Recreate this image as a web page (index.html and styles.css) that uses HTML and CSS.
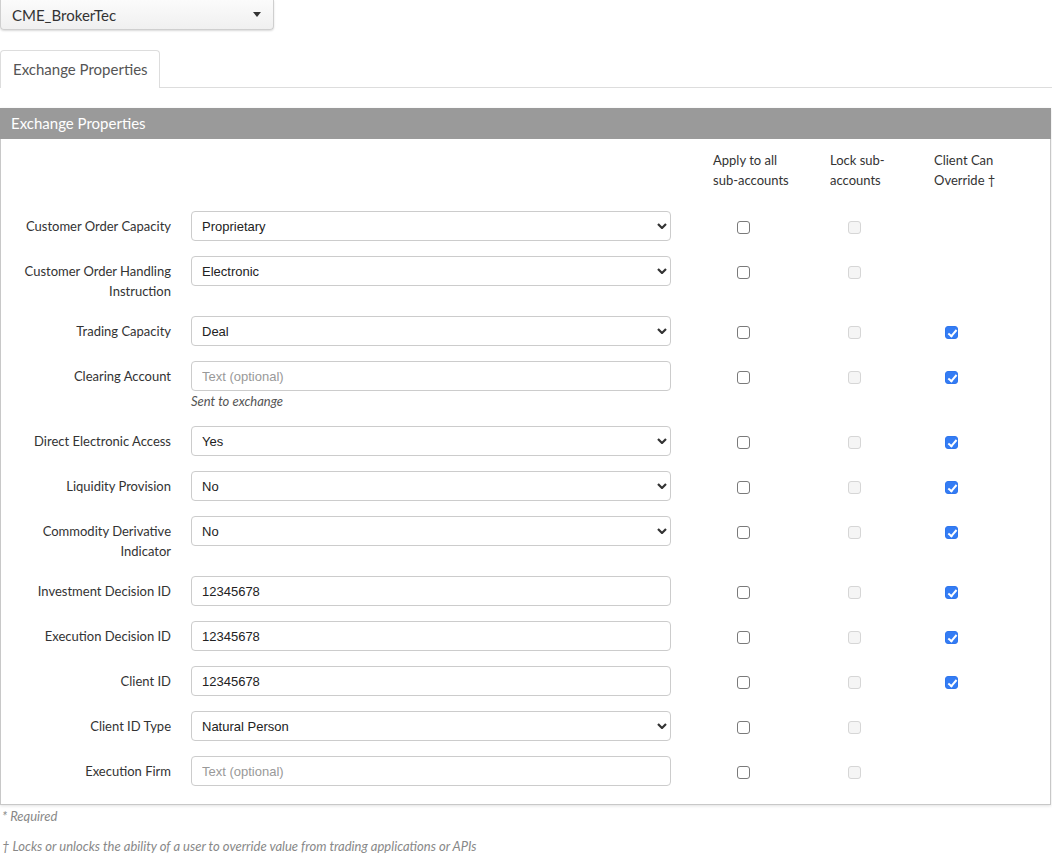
FILE: index.html
```html
<!DOCTYPE html>
<html lang="en">

<head>
    <meta charset="UTF-8">
    <title>Exchange Properties</title>
    <link rel="stylesheet" href="styles.css">
</head>

<body>
    <button class="exchange-picker">
        <span>CME_BrokerTec</span>
        <span class="caret"></span>
    </button>

    <ul class="tabs">
        <li class="tab active">Exchange Properties</li>
    </ul>

    <div class="panel">
        <div class="panel-heading">Exchange Properties</div>
        <div class="panel-body">

            <div class="row head-row">
                <div></div>
                <div></div>
                <div class="col-title">Apply to all<br>sub-accounts</div>
                <div class="col-title">Lock sub-<br>accounts</div>
                <div class="col-title">Client Can<br>Override &dagger;</div>
            </div>

            <div class="row">
                <label class="field-label">Customer Order Capacity</label>
                <div class="control">
                    <div class="select-wrap">
                        <select><option>Proprietary</option></select>
                        <svg class="chevron" viewBox="0 0 10 6"><path d="M1 1l4 4 4-4" /></svg>
                    </div>
                </div>
                <div class="check apply"><input type="checkbox"></div>
                <div class="check lock"><input type="checkbox" disabled></div>
                <div class="check override"></div>
            </div>

            <div class="row">
                <label class="field-label">Customer Order Handling Instruction</label>
                <div class="control">
                    <div class="select-wrap">
                        <select><option>Electronic</option></select>
                        <svg class="chevron" viewBox="0 0 10 6"><path d="M1 1l4 4 4-4" /></svg>
                    </div>
                </div>
                <div class="check apply"><input type="checkbox"></div>
                <div class="check lock"><input type="checkbox" disabled></div>
                <div class="check override"></div>
            </div>

            <div class="row">
                <label class="field-label">Trading Capacity</label>
                <div class="control">
                    <div class="select-wrap">
                        <select><option>Deal</option></select>
                        <svg class="chevron" viewBox="0 0 10 6"><path d="M1 1l4 4 4-4" /></svg>
                    </div>
                </div>
                <div class="check apply"><input type="checkbox"></div>
                <div class="check lock"><input type="checkbox" disabled></div>
                <div class="check override"><input type="checkbox" checked></div>
            </div>

            <div class="row">
                <label class="field-label">Clearing Account</label>
                <div class="control">
                    <input type="text" class="text-input" placeholder="Text (optional)">
                    <p class="help">Sent to exchange</p>
                </div>
                <div class="check apply"><input type="checkbox"></div>
                <div class="check lock"><input type="checkbox" disabled></div>
                <div class="check override"><input type="checkbox" checked></div>
            </div>

            <div class="row">
                <label class="field-label">Direct Electronic Access</label>
                <div class="control">
                    <div class="select-wrap">
                        <select><option>Yes</option></select>
                        <svg class="chevron" viewBox="0 0 10 6"><path d="M1 1l4 4 4-4" /></svg>
                    </div>
                </div>
                <div class="check apply"><input type="checkbox"></div>
                <div class="check lock"><input type="checkbox" disabled></div>
                <div class="check override"><input type="checkbox" checked></div>
            </div>

            <div class="row">
                <label class="field-label">Liquidity Provision</label>
                <div class="control">
                    <div class="select-wrap">
                        <select><option>No</option></select>
                        <svg class="chevron" viewBox="0 0 10 6"><path d="M1 1l4 4 4-4" /></svg>
                    </div>
                </div>
                <div class="check apply"><input type="checkbox"></div>
                <div class="check lock"><input type="checkbox" disabled></div>
                <div class="check override"><input type="checkbox" checked></div>
            </div>

            <div class="row">
                <label class="field-label">Commodity Derivative Indicator</label>
                <div class="control">
                    <div class="select-wrap">
                        <select><option>No</option></select>
                        <svg class="chevron" viewBox="0 0 10 6"><path d="M1 1l4 4 4-4" /></svg>
                    </div>
                </div>
                <div class="check apply"><input type="checkbox"></div>
                <div class="check lock"><input type="checkbox" disabled></div>
                <div class="check override"><input type="checkbox" checked></div>
            </div>

            <div class="row">
                <label class="field-label">Investment Decision ID</label>
                <div class="control">
                    <input type="text" class="text-input" value="12345678">
                </div>
                <div class="check apply"><input type="checkbox"></div>
                <div class="check lock"><input type="checkbox" disabled></div>
                <div class="check override"><input type="checkbox" checked></div>
            </div>

            <div class="row">
                <label class="field-label">Execution Decision ID</label>
                <div class="control">
                    <input type="text" class="text-input" value="12345678">
                </div>
                <div class="check apply"><input type="checkbox"></div>
                <div class="check lock"><input type="checkbox" disabled></div>
                <div class="check override"><input type="checkbox" checked></div>
            </div>

            <div class="row">
                <label class="field-label">Client ID</label>
                <div class="control">
                    <input type="text" class="text-input" value="12345678">
                </div>
                <div class="check apply"><input type="checkbox"></div>
                <div class="check lock"><input type="checkbox" disabled></div>
                <div class="check override"><input type="checkbox" checked></div>
            </div>

            <div class="row">
                <label class="field-label">Client ID Type</label>
                <div class="control">
                    <div class="select-wrap">
                        <select><option>Natural Person</option></select>
                        <svg class="chevron" viewBox="0 0 10 6"><path d="M1 1l4 4 4-4" /></svg>
                    </div>
                </div>
                <div class="check apply"><input type="checkbox"></div>
                <div class="check lock"><input type="checkbox" disabled></div>
                <div class="check override"></div>
            </div>

            <div class="row">
                <label class="field-label">Execution Firm</label>
                <div class="control">
                    <input type="text" class="text-input" placeholder="Text (optional)">
                </div>
                <div class="check apply"><input type="checkbox"></div>
                <div class="check lock"><input type="checkbox" disabled></div>
                <div class="check override"></div>
            </div>

        </div>
    </div>

    <p class="note">* Required</p>
    <p class="note">&dagger; Locks or unlocks the ability of a user to override value from trading applications or APIs</p>
</body>

</html>
```

FILE: styles.css
```css
* {
    margin: 0;
    padding: 0;
    box-sizing: border-box;
}

body {
    font-family: Lato, "Noto Sans", sans-serif;
    font-size: 13px;
    color: #333;
    background: #fff;
}

/* exchange dropdown */
.exchange-picker {
    display: flex;
    align-items: center;
    justify-content: space-between;
    width: 274px;
    height: 30px;
    padding: 0 11px;
    font-family: Lato, "Noto Sans", sans-serif;
    font-size: 15px;
    color: #333;
    background: linear-gradient(#fbfbfb, #f0f0f0);
    border: 1px solid #cfcfcf;
    border-top: none;
    border-radius: 0 0 4px 4px;
    box-shadow: 0 1px 2px rgba(0, 0, 0, 0.15);
}

.caret {
    width: 0;
    height: 0;
    margin-right: 1px;
    border-left: 4px solid transparent;
    border-right: 4px solid transparent;
    border-top: 5px solid #333;
}

/* tabs */
.tabs {
    list-style: none;
    display: flex;
    margin-top: 20px;
    border-bottom: 1px solid #ddd;
}

.tab {
    height: 38px;
    padding: 0 11px 0 12px;
    line-height: 36px;
    font-size: 15px;
    color: #555;
    border: 1px solid #ddd;
    border-bottom: none;
    border-radius: 4px 4px 0 0;
    margin-bottom: -1px;
    background: #fff;
}

/* panel */
.panel {
    width: 1051px;
    margin-top: 20px;
    border: 1px solid #c8c8c8;
    border-top: none;
    box-shadow: 0 1px 3px rgba(0, 0, 0, 0.12);
}

.panel-heading {
    height: 31px;
    padding-left: 11px;
    line-height: 31px;
    font-size: 15px;
    color: #fff;
    background: #9a9a9a;
    margin: 0 -1px;
}

.panel-body {
    padding: 11px 0 3px;
}

.row {
    display: grid;
    grid-template-columns: 190px 522px 117px 104px 1fr;
    margin-bottom: 15px;
}

.head-row {
    margin-bottom: 21px;
}

.col-title {
    line-height: 20px;
}

.field-label {
    padding: 5px 20px 0 20px;
    line-height: 20px;
    text-align: right;
}

.control {
    padding-right: 42px;
}

.select-wrap {
    position: relative;
}

.select-wrap select,
.text-input {
    display: block;
    width: 100%;
    height: 30px;
    padding: 0 10px;
    font-family: "Liberation Sans", Arial, sans-serif;
    font-size: 13px;
    color: #222;
    background: #fff;
    border: 1px solid #ccc;
    border-radius: 4px;
    outline: none;
}

.select-wrap select {
    appearance: none;
    -webkit-appearance: none;
}

.text-input::placeholder {
    color: #999;
}

.chevron {
    position: absolute;
    right: 4px;
    top: 12px;
    width: 10px;
    height: 6px;
    fill: none;
    stroke: #333;
    stroke-width: 2.2;
    pointer-events: none;
}

.help {
    line-height: 20px;
    font-style: italic;
    color: #555;
}

/* checkbox columns */
.check {
    padding-top: 10px;
}

.check.apply {
    padding-left: 24px;
}

.check.lock {
    padding-left: 18px;
}

.check.override {
    padding-left: 11px;
}

.check input {
    appearance: none;
    -webkit-appearance: none;
    display: block;
    position: relative;
    width: 13px;
    height: 13px;
    margin: 0;
    border: 1px solid #7a7a7a;
    border-radius: 3px;
    background: #fff;
}

.check input:disabled {
    border-color: #d6d6d6;
    background: #f5f5f5;
}

.check input:checked {
    border-color: #2f76ed;
    background: #347cf4;
}

.check input:checked::after {
    content: "";
    position: absolute;
    left: 3.5px;
    top: 0.5px;
    width: 3px;
    height: 7px;
    border: solid #fff;
    border-width: 0 2.5px 2.5px 0;
    transform: rotate(40deg);
}

/* footnotes */
.note {
    margin-top: 1px;
    margin-bottom: 10px;
    padding-left: 2px;
    line-height: 20px;
    font-size: 13px;
    font-style: italic;
    color: #888;
}
```
